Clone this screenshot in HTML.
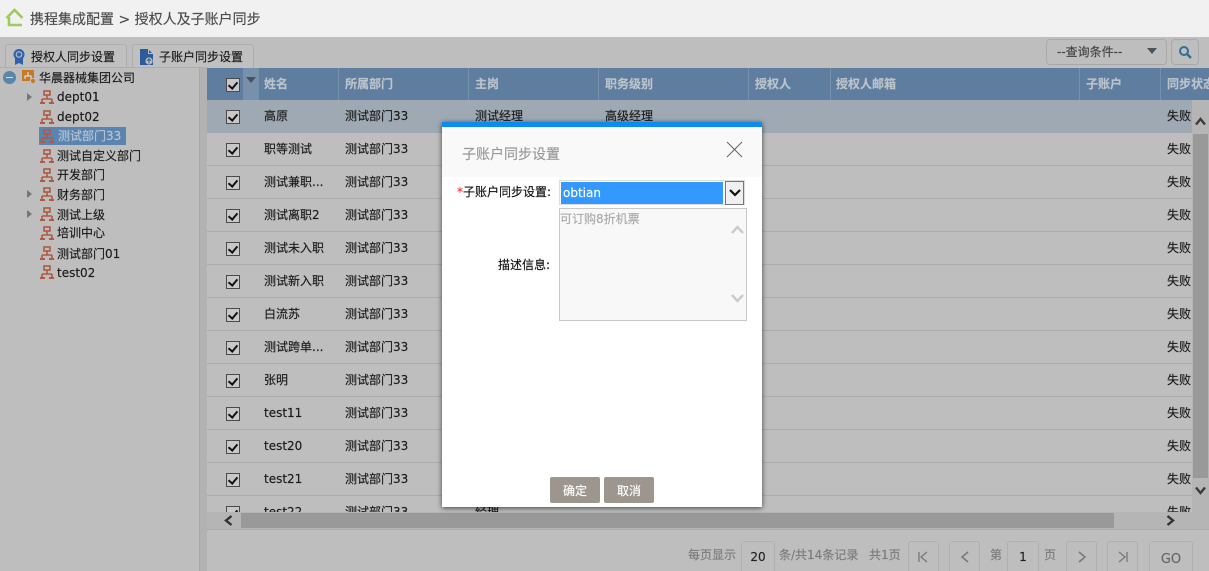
<!DOCTYPE html>
<html><head><meta charset="utf-8">
<style>
html,body{margin:0;padding:0;width:1209px;height:571px;overflow:hidden;background:#bebebe}
body{position:relative;font:12px/16px "DejaVu Sans","Noto Sans CJK SC",sans-serif;color:#1a1a1a;-webkit-text-stroke:.15px currentColor}
.a,.t,svg.a{position:absolute}
.t{white-space:nowrap}
.cb{position:absolute;left:226px;width:12px;height:12px;border:1px solid #4a4a4a;background:#c8c8c8}
.cb:after{content:"";position:absolute;left:3px;top:1px;width:4px;height:7px;border:solid #111;border-width:0 2px 2px 0;transform:rotate(40deg)}
.hl{position:absolute;left:207px;width:985px;height:1px;background:#adadad}
.th{position:absolute;top:76px;color:#bcc4cb;font-weight:bold;white-space:nowrap}
.v{position:absolute;top:68px;width:1px;height:32px;background:#7790ab}
.ic{position:absolute;left:40px;width:14px;height:14px}
.pb{position:absolute;top:541px;height:30px;border:1px solid #adb0b3;border-bottom:0;border-radius:3px 3px 0 0;box-sizing:border-box;text-align:center;color:#777;line-height:30px}
.gr{color:#7b7b7b}
</style></head><body>
<svg width="0" height="0" style="position:absolute"><defs>
<g id="org" fill="none" stroke="#b05a44" stroke-width="1.6"><rect x="4" y="1" width="6" height="4"/><path d="M7 5V9M2 9H12M2 9V12M12 9V12"/><path d="M0 13H5M9 13H14" stroke-width="2"/></g>
</defs></svg>

<!-- top bar -->
<div class="a" style="left:0;top:0;width:1209px;height:37px;background:#f1f1f1"></div>
<svg class="a" style="left:5px;top:8px" width="19" height="19"><path d="M1.5 10L9.5 2L17.5 10M4 9V17H17" fill="none" stroke="#9ccb5e" stroke-width="2.6"/></svg>
<div class="t" style="left:30px;top:12px;font-size:14px;color:#4c4c4c">携程集成配置 &gt; 授权人及子账户同步</div>

<!-- tabs -->
<div class="a" style="left:5px;top:44px;width:120px;height:24px;background:#c0c0c0;border:1px solid #adadad;border-bottom:0;border-radius:3px 3px 0 0"></div>
<div class="a" style="left:132px;top:44px;width:120px;height:24px;background:#c0c0c0;border:1px solid #adadad;border-bottom:0;border-radius:3px 3px 0 0"></div>
<svg class="a" style="left:12px;top:48px" width="14" height="18"><path d="M3 10V17L7 15L11 17V10" fill="#2f62a8"/><circle cx="7" cy="6.5" r="5.5" fill="#2f62a8"/><circle cx="7" cy="6.5" r="3.4" fill="#9db3d2"/><circle cx="7" cy="6.5" r="2" fill="#2f62a8"/></svg>
<svg class="a" style="left:140px;top:48px" width="14" height="18"><path d="M0 1H8L13 6V17H0Z" fill="#2d5a98"/><path d="M8.5 1V5.5H13" fill="none" stroke="#c0c0c0"/><circle cx="9" cy="13" r="3.6" fill="#c0c0c0"/><path d="M9 15.5V11M7 12.8L9 10.8L11 12.8" fill="none" stroke="#2d5a98"/></svg>
<div class="t" style="left:31px;top:49px">授权人同步设置</div>
<div class="t" style="left:159px;top:49px">子账户同步设置</div>

<!-- search -->
<div class="a" style="left:1046px;top:39px;width:119px;height:24px;border:1px solid #a9a9a9;border-radius:4px;background:#bebebe"></div>
<div class="t" style="left:1057px;top:44px;color:#444">--查询条件--</div>
<svg class="a" style="left:1147px;top:48px" width="10" height="6"><path d="M0 0H10L5 6Z" fill="#49535e"/></svg>
<div class="a" style="left:1171px;top:39px;width:26px;height:24px;border:1px solid #a9a9a9;border-radius:4px;background:#bebebe"></div>
<svg class="a" style="left:1178px;top:45px" width="14" height="14"><circle cx="6" cy="6" r="4" fill="none" stroke="#2f7191" stroke-width="2"/><path d="M9 9L13 13" stroke="#2f7191" stroke-width="2.4"/></svg>

<!-- tree -->
<div class="a" style="left:0;top:67px;width:199px;height:504px;background:#bebebe;border-right:1px solid #a8a8a8;border-top:1px solid #adadad"></div>
<div class="a" style="left:200px;top:67px;width:7px;height:504px;background:#b2b2b2"></div>
<div class="a" style="left:3px;top:71px;width:13px;height:13px;border-radius:50%;background:#5b86a8"></div>
<div class="a" style="left:6px;top:77px;width:7px;height:1px;background:#d5dde4"></div>
<svg class="a" style="left:22px;top:70px" width="14" height="14"><rect x="0" y="0" width="12" height="11" fill="#c57a28"/><path d="M6 2V6M3 9V6H9V9" stroke="#eee" fill="none"/><circle cx="11" cy="11" r="2.6" fill="#c57a28" stroke="#bebebe"/></svg>
<div class="t" style="left:39px;top:70px">华晨器械集团公司</div>

<div class="a" style="left:39px;top:127px;width:87px;height:18px;background:#5b84b1"></div>

<svg class="a" style="left:27px;top:93px" width="5" height="8"><path d="M0 0L5 4L0 8Z" fill="#767676"/></svg>
<svg class="a" style="left:27px;top:190px" width="5" height="8"><path d="M0 0L5 4L0 8Z" fill="#767676"/></svg>
<svg class="a" style="left:27px;top:210px" width="5" height="8"><path d="M0 0L5 4L0 8Z" fill="#767676"/></svg>

<svg class="ic" style="top:90px"><use href="#org"/></svg><div class="t" style="left:57px;top:89px">dept01</div>
<svg class="ic" style="top:110px"><use href="#org"/></svg><div class="t" style="left:57px;top:109px">dept02</div>
<svg class="ic" style="top:129px"><use href="#org"/></svg><div class="t" style="left:58px;top:128px;color:#b9c6d3">测试部门33</div>
<svg class="ic" style="top:149px"><use href="#org"/></svg><div class="t" style="left:57px;top:148px">测试自定义部门</div>
<svg class="ic" style="top:168px"><use href="#org"/></svg><div class="t" style="left:57px;top:167px">开发部门</div>
<svg class="ic" style="top:187px"><use href="#org"/></svg><div class="t" style="left:57px;top:187px">财务部门</div>
<svg class="ic" style="top:207px"><use href="#org"/></svg><div class="t" style="left:57px;top:207px">测试上级</div>
<svg class="ic" style="top:226px"><use href="#org"/></svg><div class="t" style="left:57px;top:225px">培训中心</div>
<svg class="ic" style="top:246px"><use href="#org"/></svg><div class="t" style="left:57px;top:246px">测试部门01</div>
<svg class="ic" style="top:265px"><use href="#org"/></svg><div class="t" style="left:57px;top:265px">test02</div>

<!-- grid header -->
<div class="a" style="left:207px;top:68px;width:1002px;height:32px;background:#5f7e9f"></div>
<div class="a" style="left:243px;top:68px;width:15px;height:32px;background:#7790ab"></div>
<svg class="a" style="left:246px;top:77px" width="10" height="6"><path d="M0 0H10L5 6Z" fill="#49535e"/></svg>
<div class="v" style="left:258px"></div><div class="v" style="left:338px"></div><div class="v" style="left:468px"></div><div class="v" style="left:598px"></div><div class="v" style="left:748px"></div><div class="v" style="left:830px"></div><div class="v" style="left:1079px"></div><div class="v" style="left:1160px"></div>
<div class="cb" style="top:78px"></div>
<div class="th" style="left:264px">姓名</div><div class="th" style="left:345px">所属部门</div><div class="th" style="left:475px">主岗</div><div class="th" style="left:605px">职务级别</div><div class="th" style="left:755px">授权人</div><div class="th" style="left:836px">授权人邮箱</div><div class="th" style="left:1086px">子账户</div><div class="th" style="left:1167px">同步状态</div>

<!-- rows -->
<div class="a" style="left:207px;top:100px;width:985px;height:33px;background:#9fa9b3"></div>
<div class="hl" style="top:165px"></div><div class="hl" style="top:198px"></div><div class="hl" style="top:231px"></div><div class="hl" style="top:264px"></div><div class="hl" style="top:297px"></div><div class="hl" style="top:330px"></div><div class="hl" style="top:363px"></div><div class="hl" style="top:396px"></div><div class="hl" style="top:429px"></div><div class="hl" style="top:462px"></div><div class="hl" style="top:495px"></div>

<div class="cb" style="top:110px"></div><div class="t" style="left:264px;top:108px">高原</div><div class="t" style="left:345px;top:108px">测试部门33</div><div class="t" style="left:475px;top:108px">测试经理</div><div class="t" style="left:605px;top:108px">高级经理</div><div class="t" style="left:1167px;top:108px">失败</div>
<div class="cb" style="top:143px"></div><div class="t" style="left:264px;top:141px">职等测试</div><div class="t" style="left:345px;top:141px">测试部门33</div><div class="t" style="left:1167px;top:141px">失败</div>
<div class="cb" style="top:176px"></div><div class="t" style="left:264px;top:174px">测试兼职...</div><div class="t" style="left:345px;top:174px">测试部门33</div><div class="t" style="left:1167px;top:174px">失败</div>
<div class="cb" style="top:209px"></div><div class="t" style="left:264px;top:207px">测试离职2</div><div class="t" style="left:345px;top:207px">测试部门33</div><div class="t" style="left:1167px;top:207px">失败</div>
<div class="cb" style="top:242px"></div><div class="t" style="left:264px;top:240px">测试未入职</div><div class="t" style="left:345px;top:240px">测试部门33</div><div class="t" style="left:1167px;top:240px">失败</div>
<div class="cb" style="top:275px"></div><div class="t" style="left:264px;top:273px">测试新入职</div><div class="t" style="left:345px;top:273px">测试部门33</div><div class="t" style="left:1167px;top:273px">失败</div>
<div class="cb" style="top:308px"></div><div class="t" style="left:264px;top:306px">白流苏</div><div class="t" style="left:345px;top:306px">测试部门33</div><div class="t" style="left:1167px;top:306px">失败</div>
<div class="cb" style="top:341px"></div><div class="t" style="left:264px;top:339px">测试跨单...</div><div class="t" style="left:345px;top:339px">测试部门33</div><div class="t" style="left:1167px;top:339px">失败</div>
<div class="cb" style="top:374px"></div><div class="t" style="left:264px;top:372px">张明</div><div class="t" style="left:345px;top:372px">测试部门33</div><div class="t" style="left:1167px;top:372px">失败</div>
<div class="cb" style="top:407px"></div><div class="t" style="left:264px;top:405px">test11</div><div class="t" style="left:345px;top:405px">测试部门33</div><div class="t" style="left:1167px;top:405px">失败</div>
<div class="cb" style="top:440px"></div><div class="t" style="left:264px;top:438px">test20</div><div class="t" style="left:345px;top:438px">测试部门33</div><div class="t" style="left:1167px;top:438px">失败</div>
<div class="cb" style="top:473px"></div><div class="t" style="left:264px;top:471px">test21</div><div class="t" style="left:345px;top:471px">测试部门33</div><div class="t" style="left:1167px;top:471px">失败</div>
<div class="cb" style="top:506px"></div><div class="t" style="left:264px;top:504px">test22</div><div class="t" style="left:345px;top:504px">测试部门33</div><div class="t" style="left:475px;top:504px">经理</div><div class="t" style="left:1167px;top:504px">失败</div>

<!-- scrollbars -->
<div class="a" style="left:207px;top:512px;width:1002px;height:59px;background:#bebebe"></div>
<div class="a" style="left:207px;top:529px;width:1002px;height:1px;background:#adadad"></div>
<div class="a" style="left:207px;top:512px;width:1002px;height:17px;background:#b5b5b5"></div>
<div class="a" style="left:241px;top:513px;width:873px;height:15px;background:#999"></div>
<svg class="a" style="left:223px;top:515px" width="11" height="11"><path d="M8.5 1L3 5.5L8.5 10" fill="none" stroke="#333" stroke-width="2.4"/></svg>
<svg class="a" style="left:1165px;top:515px" width="11" height="11"><path d="M2.5 1L8 5.5L2.5 10" fill="none" stroke="#333" stroke-width="2.4"/></svg>
<div class="a" style="left:1192px;top:100px;width:17px;height:412px;background:#b5b5b5"></div>
<div class="a" style="left:1193px;top:134px;width:15px;height:344px;background:#999"></div>
<svg class="a" style="left:1195px;top:117px" width="11" height="9"><path d="M1 7.5L5.5 2L10 7.5" fill="none" stroke="#3c3c3c" stroke-width="2.4"/></svg>
<svg class="a" style="left:1195px;top:486px" width="11" height="9"><path d="M1 1.5L5.5 7L10 1.5" fill="none" stroke="#3c3c3c" stroke-width="2.4"/></svg>

<!-- pager -->
<div class="t gr" style="left:688px;top:547px">每页显示</div>
<div class="pb" style="left:741px;width:34px;color:#222">20</div>
<div class="t gr" style="left:779px;top:547px">条/共14条记录</div>
<div class="t gr" style="left:869px;top:547px">共1页</div>
<div class="pb" style="left:908px;width:31px"></div>
<svg class="a" style="left:917px;top:550px" width="12" height="14"><path d="M2 2V12M10 2L4 7L10 12" fill="none" stroke="#777" stroke-width="1.3"/></svg>
<div class="pb" style="left:949px;width:31px"></div>
<svg class="a" style="left:960px;top:550px" width="10" height="14"><path d="M8 2L2 7L8 12" fill="none" stroke="#777" stroke-width="1.5"/></svg>
<div class="t gr" style="left:990px;top:547px">第</div>
<div class="pb" style="left:1007px;width:32px;color:#222">1</div>
<div class="t gr" style="left:1044px;top:547px">页</div>
<div class="pb" style="left:1066px;width:31px"></div>
<svg class="a" style="left:1077px;top:550px" width="10" height="14"><path d="M2 2L8 7L2 12" fill="none" stroke="#777" stroke-width="1.5"/></svg>
<div class="pb" style="left:1107px;width:31px"></div>
<svg class="a" style="left:1117px;top:550px" width="12" height="14"><path d="M2 2L8 7L2 12M10 2V12" fill="none" stroke="#777" stroke-width="1.3"/></svg>
<div class="pb" style="left:1149px;width:44px;font-size:13px;line-height:35px;color:#666">GO</div>

<!-- dialog -->
<div class="a" style="left:442px;top:122px;width:320px;height:385px;background:#fff;box-shadow:0 1px 5px rgba(0,0,0,.65)"></div>
<div class="a" style="left:442px;top:122px;width:320px;height:5px;background:#0a8cf0"></div>
<div class="a" style="left:442px;top:127px;width:320px;height:50px;background:#f9f9f9"></div>
<div class="t" style="left:462px;top:147px;font-size:14px;color:#999">子账户同步设置</div>
<svg class="a" style="left:726px;top:141px" width="17" height="17"><path d="M1 1L16 16M16 1L1 16" stroke="#666" stroke-width="1" fill="none"/></svg>

<div class="t" style="left:457px;top:184px;color:#111"><span style="color:#e33">*</span>子账户同步设置:</div>
<div class="a" style="left:559px;top:180px;width:186px;height:25px;border:1px solid #ddd;box-sizing:border-box"></div>
<div class="a" style="left:561px;top:182px;width:162px;height:22px;background:#3399ff"></div>
<div class="t" style="left:563px;top:185px;color:#fff">obtian</div>
<div class="a" style="left:725px;top:181px;width:19px;height:24px;background:#f0f0f0;border:1px solid #777;box-sizing:border-box"></div>
<svg class="a" style="left:729px;top:189px" width="12" height="8"><path d="M1 1L6 6L11 1" fill="none" stroke="#111" stroke-width="2.2"/></svg>

<div class="t" style="left:498px;top:257px;color:#111">描述信息:</div>
<div class="a" style="left:559px;top:208px;width:188px;height:113px;background:#f8f8f8;border:1px solid #c8c8c8;box-sizing:border-box"></div>
<div class="t" style="left:560px;top:211px;color:#aaa">可订购8折机票</div>
<svg class="a" style="left:731px;top:225px" width="13" height="10"><path d="M1 8L6.5 2L12 8" fill="none" stroke="#c9c9c9" stroke-width="2.4"/></svg>
<svg class="a" style="left:731px;top:293px" width="13" height="10"><path d="M1 2L6.5 8L12 2" fill="none" stroke="#c9c9c9" stroke-width="2.4"/></svg>

<div class="a" style="left:550px;top:477px;width:50px;height:26px;background:#9c968e;border-radius:2px;color:#fff;text-align:center;line-height:29px">确定</div>
<div class="a" style="left:604px;top:477px;width:50px;height:26px;background:#9c968e;border-radius:2px;color:#fff;text-align:center;line-height:29px">取消</div>
</body></html>
